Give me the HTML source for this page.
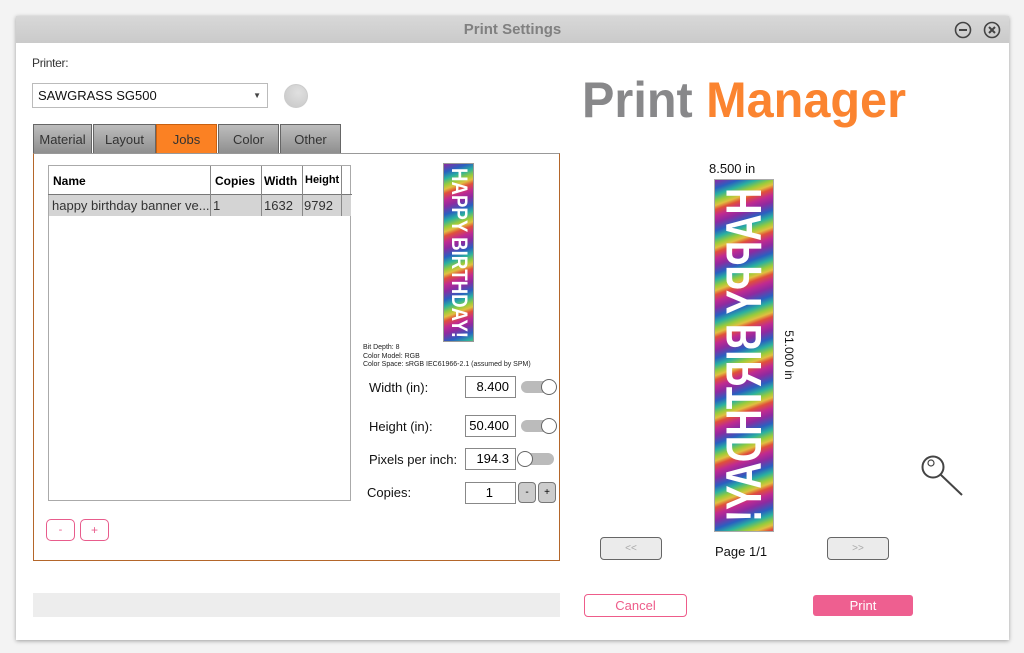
<!DOCTYPE html>
<html><head><meta charset="utf-8"><style>
*{box-sizing:border-box;margin:0;padding:0}
body{width:1024px;height:653px;background:#f3f3f3;font-family:"Liberation Sans",Arial,sans-serif;position:relative;overflow:hidden}
.a{position:absolute}
.dlg{left:16px;top:16px;width:993px;height:624px;background:#fff;box-shadow:0 1px 4px rgba(0,0,0,.35)}
.title{left:16px;top:16px;width:993px;height:27px;background:linear-gradient(#d8d8d8,#cacaca);color:#808080;font-weight:bold;font-size:15px;text-align:center;line-height:27px}
.tab{top:124px;height:30px;background:linear-gradient(#bdbdbd,#8f8f8f);border:1px solid #666;font-size:13px;color:#333;text-align:center;line-height:29px}
.rain{background:repeating-linear-gradient(160deg,#8e2aa0 0,#2a5fc0 8px,#2ab0a0 14px,#9acc3a 20px,#e0c040 24px,#e0503a 28px,#c02a90 34px,#8e2aa0 40px);}
.inp{background:#fff;border:1px solid #888;font-size:13px;text-align:right;padding-right:6px;line-height:20px;height:22px}
.lbl{font-size:13px;color:#111}
.sl{width:34px;height:12px;background:#bbb;border-radius:6px}
.knob{width:16px;height:16px;border:1px solid #666;background:#fff;border-radius:50%}
</style></head><body>
<div class="a dlg"></div>
<div class="a title">Print Settings</div>
<svg class="a" style="left:954px;top:21px" width="18" height="18"><circle cx="9" cy="9" r="7.5" fill="none" stroke="#444" stroke-width="1.6"/><line x1="5" y1="9" x2="13" y2="9" stroke="#444" stroke-width="2"/></svg>
<svg class="a" style="left:983px;top:21px" width="18" height="18"><circle cx="9" cy="9" r="7.5" fill="none" stroke="#444" stroke-width="1.6"/><path d="M6 6L12 12M12 6L6 12" stroke="#444" stroke-width="2"/></svg>

<div class="a" style="left:32px;top:56px;font-size:12px;color:#333;letter-spacing:-.3px">Printer:</div>
<div class="a" style="left:32px;top:83px;width:236px;height:25px;border:1px solid #bbb;font-size:13px;line-height:23px;padding-left:5px;color:#111">SAWGRASS SG500<span class="a" style="right:6px;top:0;font-size:8px;color:#444">▼</span></div>
<div class="a" style="left:284px;top:84px;width:24px;height:24px;border-radius:50%;background:radial-gradient(circle at 60% 35%,#e0e0e0,#c6c6c6);border:1px solid #ccc"></div>

<div class="a tab" style="left:33px;width:59px">Material</div>
<div class="a tab" style="left:93px;width:63px">Layout</div>
<div class="a tab" style="left:156px;width:61px;background:#fb8123;border-color:#c86010">Jobs</div>
<div class="a tab" style="left:218px;width:61px">Color</div>
<div class="a tab" style="left:280px;width:61px">Other</div>

<div class="a" style="left:33px;top:153px;width:527px;height:408px;border:1px solid #b4662a;border-top-color:#999"></div>
<div class="a" style="left:48px;top:165px;width:303px;height:336px;border:1px solid #aaa;background:#fff"></div>
<div class="a" style="left:48px;top:166px;width:304px;height:29px;border-bottom:1px solid #777;font-size:12px;font-weight:bold">
<span class="a" style="left:5px;top:8px">Name</span><span class="a" style="left:167px;top:8px">Copies</span><span class="a" style="left:216px;top:8px">Width</span><span class="a" style="left:257px;top:8px;font-size:11px">Height</span></div>
<div class="a" style="left:49px;top:195px;width:302px;height:21px;background:#d4d4d4;font-size:13px;color:#333;line-height:21px">
<span class="a" style="left:3px">happy birthday banner ve...</span><span class="a" style="left:164px">1</span><span class="a" style="left:215px">1632</span><span class="a" style="left:255px">9792</span></div>
<div class="a" style="left:210px;top:166px;width:1px;height:50px;background:#888"></div>
<div class="a" style="left:261px;top:166px;width:1px;height:50px;background:#888"></div>
<div class="a" style="left:302px;top:166px;width:1px;height:50px;background:#888"></div>
<div class="a" style="left:341px;top:166px;width:1px;height:50px;background:#888"></div>

<div class="a" style="left:46px;top:519px;width:29px;height:22px;border:1px solid #e85c8c;border-radius:5px;color:#e85c8c;font-size:11px;text-align:center;line-height:20px">-</div>
<div class="a" style="left:80px;top:519px;width:29px;height:22px;border:1px solid #e85c8c;border-radius:5px;color:#e85c8c;font-size:12px;text-align:center;line-height:20px">+</div>

<div class="a rain" style="left:443px;top:163px;width:31px;height:179px;border:1px solid #999;overflow:hidden">
<svg width="29" height="177" style="display:block"><text transform="translate(8,4) rotate(90)" x="0" y="0" font-family="Liberation Sans" font-weight="bold" font-size="22" fill="#fff" textLength="170" lengthAdjust="spacingAndGlyphs">HAPPY BIRTHDAY!</text></svg></div>
<div class="a" style="left:363px;top:344px;font-size:7px;line-height:8.5px;color:#222">Bit Depth: 8<br>Color Model: RGB<br>Color Space: sRGB IEC61966-2.1 (assumed by SPM)</div>

<div class="a lbl" style="left:369px;top:380px">Width (in):</div>
<div class="a inp" style="left:465px;top:376px;width:51px">8.400</div>
<div class="a sl" style="left:521px;top:381px"></div><div class="a knob" style="left:541px;top:379px"></div>
<div class="a lbl" style="left:369px;top:419px">Height (in):</div>
<div class="a inp" style="left:465px;top:415px;width:51px">50.400</div>
<div class="a sl" style="left:521px;top:420px"></div><div class="a knob" style="left:541px;top:418px"></div>
<div class="a lbl" style="left:369px;top:452px">Pixels per inch:</div>
<div class="a inp" style="left:465px;top:448px;width:51px">194.3</div>
<div class="a sl" style="left:520px;top:453px"></div><div class="a knob" style="left:517px;top:451px"></div>
<div class="a lbl" style="left:367px;top:485px">Copies:</div>
<div class="a inp" style="left:465px;top:482px;width:51px;padding-right:22px">1</div>
<div class="a" style="left:518px;top:482px;width:18px;height:21px;border:1px solid #777;border-radius:4px;background:#ccc;font-size:10px;text-align:center;line-height:19px">-</div>
<div class="a" style="left:538px;top:482px;width:18px;height:21px;border:1px solid #777;border-radius:4px;background:#ccc;font-size:10px;text-align:center;line-height:19px">+</div>

<div class="a" style="left:33px;top:593px;width:527px;height:24px;background:#ededed"></div>

<svg class="a" style="left:578px;top:70px" width="340" height="60"><text x="4" y="47" font-family="Liberation Sans" font-weight="bold" font-size="50" textLength="324" lengthAdjust="spacingAndGlyphs"><tspan fill="#88888a">Print </tspan><tspan fill="#fb8430">Manager</tspan></text></svg>

<div class="a" style="left:709px;top:161px;font-size:13px;color:#111">8.500 in</div>
<div class="a rain" style="left:714px;top:179px;width:60px;height:353px;border:1px solid #aaa;overflow:hidden">
<svg width="58" height="351" style="display:block"><g transform="translate(58,0) scale(-1,1)"><text transform="translate(12,8) rotate(90)" x="0" y="0" font-family="Liberation Sans" font-weight="bold" font-size="50" fill="#fff" textLength="334" lengthAdjust="spacingAndGlyphs">HAPPY BIRTHDAY!</text></g></svg></div>
<div class="a" style="left:789px;top:355px;font-size:12px;color:#111;transform:translate(-50%,-50%) rotate(90deg);white-space:nowrap">51.000 in</div>

<svg class="a" style="left:918px;top:452px" width="48" height="48"><circle cx="15" cy="15" r="10.5" fill="none" stroke="#444" stroke-width="2"/><circle cx="13" cy="11" r="3" fill="none" stroke="#444" stroke-width="1.2"/><line x1="23" y1="23" x2="44" y2="43" stroke="#444" stroke-width="2"/></svg>

<div class="a" style="left:600px;top:537px;width:62px;height:23px;border:1px solid #666;border-radius:4px;background:#ebebeb;color:#aaa;font-size:10px;text-align:center;line-height:21px">&lt;&lt;</div>
<div class="a" style="left:827px;top:537px;width:62px;height:23px;border:1px solid #666;border-radius:4px;background:#ebebeb;color:#aaa;font-size:10px;text-align:center;line-height:21px">&gt;&gt;</div>
<div class="a" style="left:715px;top:544px;font-size:13px;color:#111">Page 1/1</div>

<div class="a" style="left:584px;top:594px;width:103px;height:23px;border:1px solid #ee5c8a;border-radius:4px;color:#ee5c8a;font-size:13px;text-align:center;line-height:21px">Cancel</div>
<div class="a" style="left:813px;top:595px;width:100px;height:21px;background:#ee5f90;border-radius:3px;color:#fff;font-size:13px;text-align:center;line-height:21px">Print</div>
</body></html>
